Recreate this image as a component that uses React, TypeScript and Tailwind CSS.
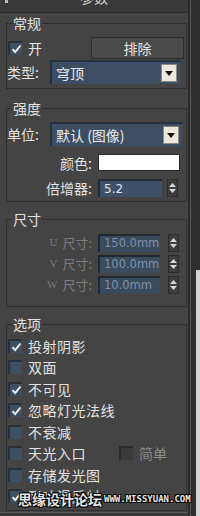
import React from 'react';

const font = "font-['Noto_Sans_CJK_SC','Noto_Sans',sans-serif]";

function Check({ on, dim }: { on?: boolean; dim?: boolean }) {
    return (
        <span
            className={`flex h-[14px] w-[14px] shrink-0 items-center justify-center border-t-2 border-l-2 ${
                dim ? 'border-[#2c2c2c] bg-[#3a3a3a]' : 'border-[#27313c] bg-[#3d4f63]'
            }`}
        >
            {on && (
                <svg width="11" height="10" viewBox="0 0 11 10">
                    <path d="M1.5 5.2 L4.2 8 L9.5 1.5" stroke="#f4f4f4" strokeWidth="1.9" fill="none" />
                </svg>
            )}
        </span>
    );
}

function Spin() {
    return (
        <span className="flex h-[18px] w-[11px] shrink-0 flex-col items-center justify-center gap-[2px] border border-[#2c2c2c] bg-[#3d3d3d]">
            <svg width="7" height="4" viewBox="0 0 7 4">
                <path d="M0 4 L3.5 0 L7 4 Z" fill="#d8d8d8" />
            </svg>
            <svg width="7" height="4" viewBox="0 0 7 4">
                <path d="M0 0 L3.5 4 L7 0 Z" fill="#d8d8d8" />
            </svg>
        </span>
    );
}

function Dropdown({ text, width }: { text: string; width: string }) {
    return (
        <div className={`flex h-[24px] ${width} items-center border-t-2 border-l-2 border-[#26303b] bg-[#3d4e62] pl-[4px] pr-[3px]`}>
            <span className="flex-1 text-[14px] leading-[16px] text-[#ececec]">{text}</span>
            <span className="flex h-[18px] w-[16px] items-center justify-center border border-[#8a8a80] bg-[#ece9dc]">
                <svg width="8" height="5" viewBox="0 0 8 5">
                    <path d="M0 0 L4 5 L8 0 Z" fill="#111" />
                </svg>
            </span>
        </div>
    );
}

function Group({ title, className, children }: { title: string; className?: string; children: React.ReactNode }) {
    return (
        <fieldset className={`border border-[#2f2f2f] ${className ?? ''}`}>
            <legend className="ml-[5px] px-[1px] text-[14px] leading-[14px] text-[#e2e2e2]">{title}</legend>
            {children}
        </fieldset>
    );
}

function SizeRow({ axis, value, className }: { axis: string; value: string; className?: string }) {
    return (
        <div className={`flex h-[17px] items-center ${className ?? ''}`}>
            <span className="flex w-[86px] justify-end gap-[5px] pr-[1px] text-[13px] leading-[15px] text-[#7c7c7c]">
                <span className="font-['Liberation_Serif',serif] text-[11px]">{axis}</span>
                <span>尺寸:</span>
            </span>
            <span className="ml-[5px] flex h-[18px] w-[62px] items-center border-t-2 border-l-2 border-[#1f2730] bg-[#3a4b5e] pl-[4px] font-['DejaVu_Sans',sans-serif] text-[11.5px] text-[#7e90a3]">
                {value}
            </span>
            <span className="ml-[8px]">
                <Spin />
            </span>
        </div>
    );
}

const options: { label: string; on: boolean }[] = [
    { label: '投射阴影', on: true },
    { label: '双面', on: false },
    { label: '不可见', on: true },
    { label: '忽略灯光法线', on: true },
    { label: '不衰减', on: false },
    { label: '天光入口', on: false },
    { label: '存储发光图', on: false },
    { label: '影响漫反射', on: true },
];

export default function App() {
    return (
        <div className={`relative flex h-[516px] w-[200px] overflow-hidden bg-[#444444] ${font}`}>
            <div className="flex w-[188px] flex-col">
                {/* rollout title, cut off at the top */}
                <div className="flex h-[13px] items-start overflow-hidden border-b border-[#2b2b2b] bg-[#3a3a3a]">
                    <span className="ml-[5px] h-[3px] w-[3px] bg-[#bdbdbd]" />
                    <span className="ml-[72px] -mt-[10px] text-[14px] leading-[15px] text-[#d8d8d8]">参数</span>
                </div>

                <div className="pl-[6px] pr-[1px]">
                    <Group title="常规" className="mt-[3px] pb-[4px]">
                        <div className="mt-[7px] flex h-[22px] items-center">
                            <span className="ml-[1px]">
                                <Check on />
                            </span>
                            <span className="ml-[6px] text-[14px] leading-[16px] text-[#e6e6e6]">开</span>
                            <button className="mr-[2px] ml-auto flex h-[22px] w-[93px] items-center justify-center border border-[#2c2c2c] bg-[#4a4a4a] text-[14px] leading-[16px] text-[#e6e6e6]">
                                排除
                            </button>
                        </div>
                        <div className="mt-[1px] flex h-[24px] items-center">
                            <span className="w-[43px] text-[14px] leading-[16px] text-[#e2e2e2]">类型:</span>
                            <Dropdown text="穹顶" width="w-[130px]" />
                        </div>
                    </Group>

                    <Group title="强度" className="mt-[12px] pb-[5px]">
                        <div className="mt-[7px] flex h-[24px] items-center">
                            <span className="w-[43px] text-[14px] leading-[16px] text-[#e2e2e2]">单位:</span>
                            <Dropdown text="默认 (图像)" width="w-[132px]" />
                        </div>
                        <div className="mt-[8px] flex h-[17px] items-center">
                            <span className="w-[85px] text-right text-[14px] leading-[16px] text-[#e2e2e2]">颜色:</span>
                            <span className="ml-[6px] h-[17px] w-[82px] border border-[#2a2a2a] bg-white" />
                        </div>
                        <div className="mt-[8px] flex h-[17px] items-center">
                            <span className="w-[85px] text-right text-[14px] leading-[16px] text-[#e2e2e2]">倍增器:</span>
                            <span className="ml-[6px] flex h-[18px] w-[64px] items-center border-t-2 border-l-2 border-[#222a33] bg-[#3f5169] pl-[4px] font-['DejaVu_Sans',sans-serif] text-[12px] text-[#e2e8ee]">
                                5.2
                            </span>
                            <span className="ml-[5px]">
                                <Spin />
                            </span>
                        </div>
                    </Group>

                    <Group title="尺寸" className="mt-[10px] pb-[13px]">
                        <SizeRow axis="U" value="150.0mm" className="mt-[8px]" />
                        <SizeRow axis="V" value="100.0mm" className="mt-[4px]" />
                        <SizeRow axis="W" value="10.0mm" className="mt-[4px]" />
                    </Group>

                    <Group title="选项" className="mt-[10px] pb-[3px]">
                        <div className="mt-[4px] flex flex-col">
                            {options.map((o) => (
                                <div key={o.label} className="flex h-[21.5px] items-center">
                                    <span className="ml-[1px]">
                                        <Check on={o.on} />
                                    </span>
                                    <span className="ml-[6px] text-[14px] leading-[16px] tracking-[0.5px] text-[#e2e2e2]">
                                        {o.label}
                                    </span>
                                    {o.label === '天光入口' && (
                                        <div className="ml-[33px] flex items-center">
                                            <Check dim />
                                            <span className="ml-[6px] text-[14px] leading-[16px] text-[#8a8a8a]">简单</span>
                                        </div>
                                    )}
                                </div>
                            ))}
                        </div>
                    </Group>
                </div>
                <div className="mt-auto h-[4px] border-t border-[#5a5a5a] bg-[#3a3a3a]" />
            </div>

            {/* scrollbar strip */}
            <div className="flex w-[12px]">
                <div className="w-[2px] bg-[#2a2a2a]" />
                <div className="w-[1px] bg-[#585858]" />
                <div className="w-[5px] bg-[#2f2f2f]" />
                <div className="flex w-[4px] flex-col">
                    <div className="h-[270px] bg-[#2f2f2f]" />
                    <div className="flex-1 bg-[#d4d4d4]" />
                </div>
            </div>

            {/* watermark */}
            <div className="absolute top-[491px] left-[18px] flex items-center gap-[2px] text-white/90 [text-shadow:1px_1px_0_#000,-1px_-1px_0_#000,1px_-1px_0_#000,-1px_1px_0_#000]">
                <span className="text-[14px] leading-[16px] font-bold">思缘设计论坛</span>
                <span className="font-['DejaVu_Sans_Mono',monospace] text-[9px] leading-[12px] font-bold">WWW.MISSYUAN.COM</span>
            </div>
        </div>
    );
}
